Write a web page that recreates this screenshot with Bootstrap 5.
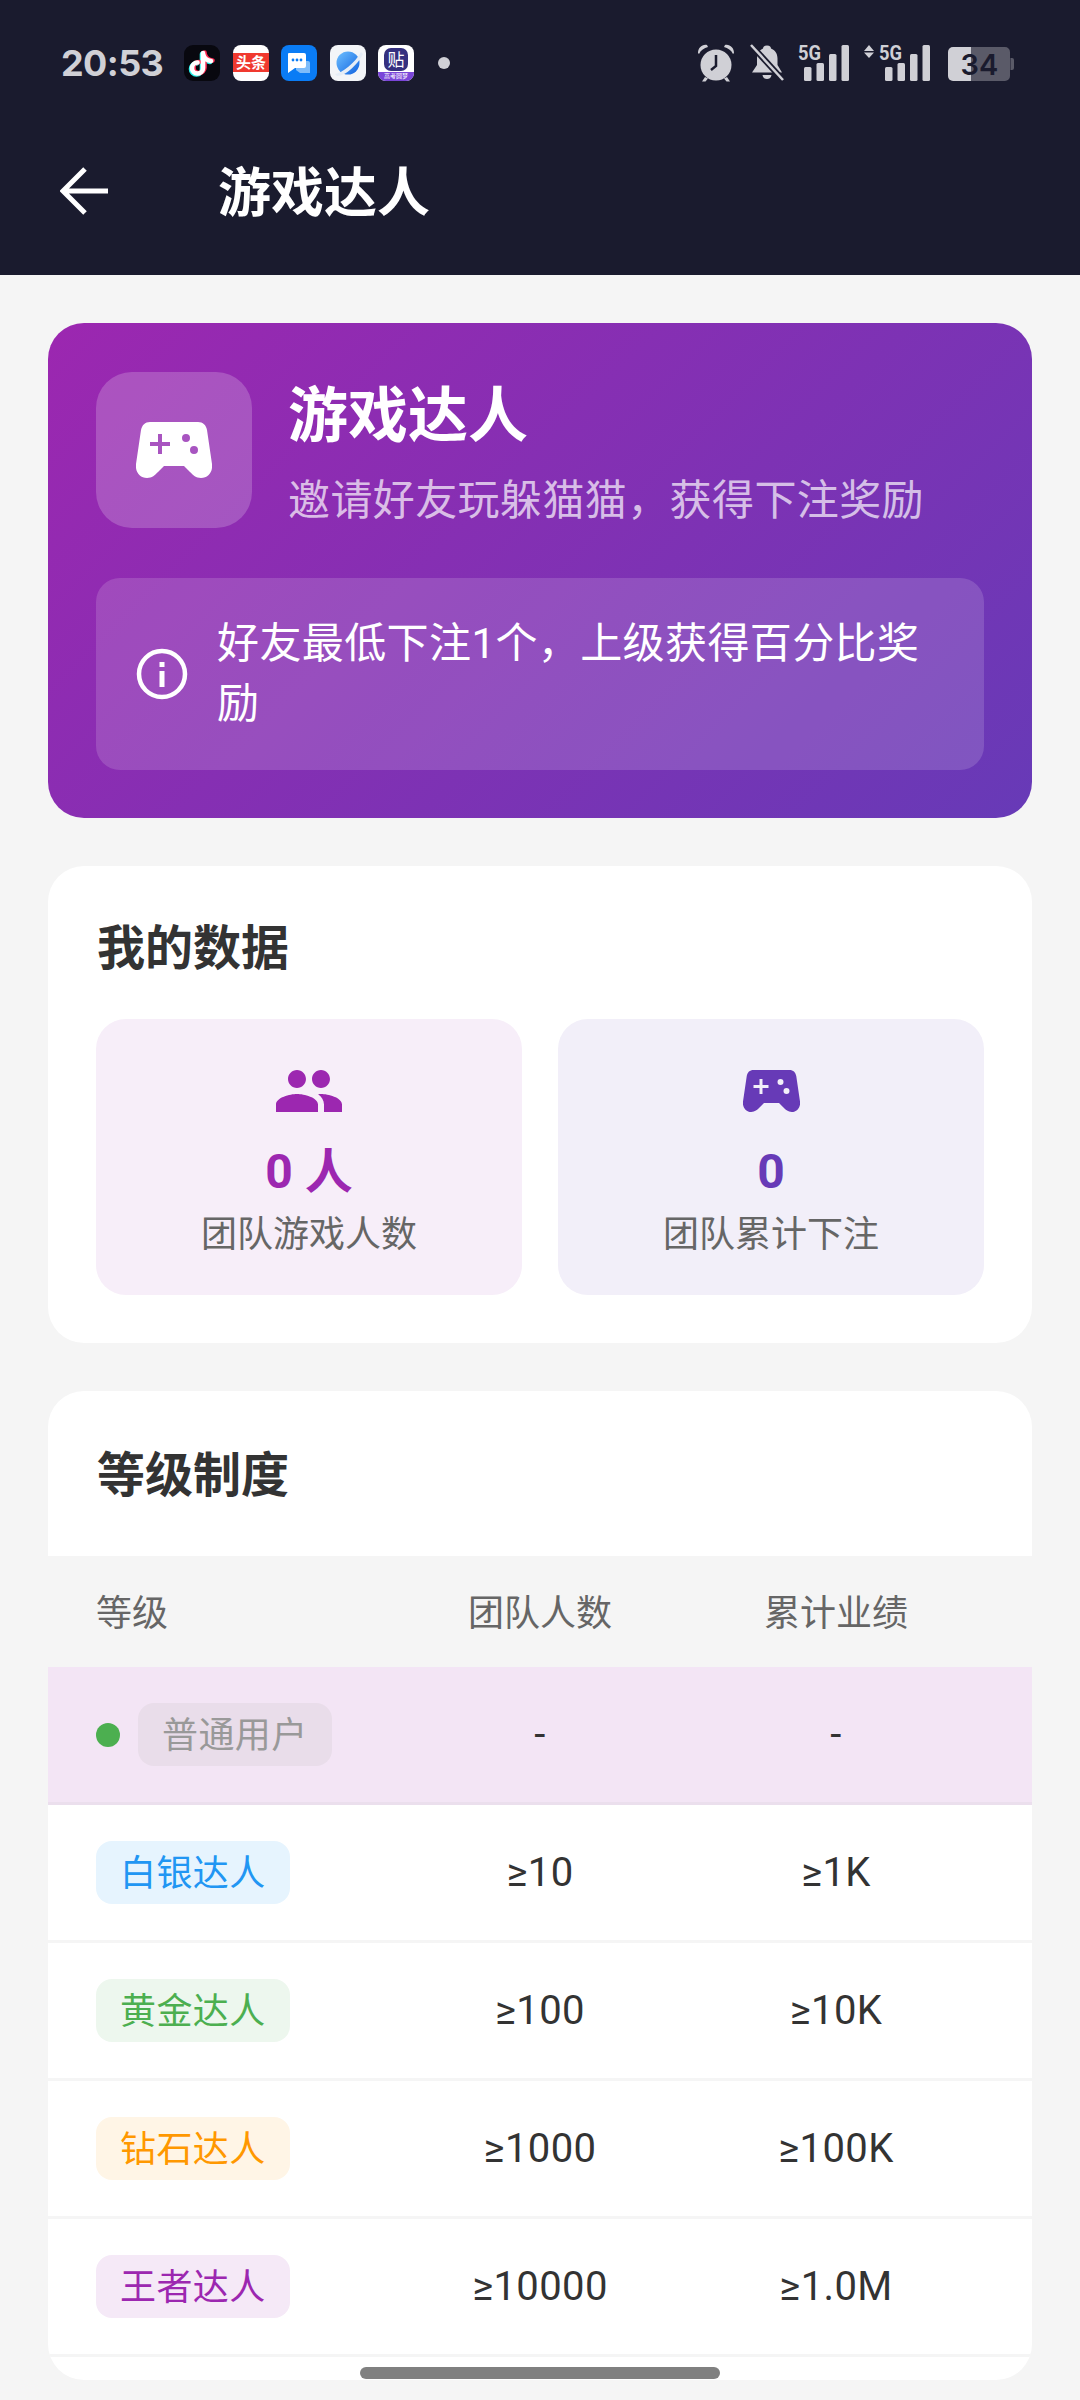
<!DOCTYPE html>
<html lang="zh">
<head>
  <meta charset="utf-8">
  <title>游戏达人</title>
  <link rel="stylesheet" href="https://cdn.jsdelivr.net/npm/bootstrap@5.3.0/dist/css/bootstrap.min.css">
  <style>
    body { width: 1080px; height: 2400px; overflow: hidden; background: #f5f5f5; color: #333; font-family: Roboto, "Noto Sans CJK SC", sans-serif; }
    .app-head { height: 275px; background: #1a1b2e; color: #fff; }
    .status-row { height: 125px; padding: 0 66px 0 61px; color: #d0d0d6; }
    .status-time { width: 98px; margin-right: 25px; font: 700 36px/1 Inter, sans-serif; letter-spacing: -.6px; white-space: nowrap; }
    .app-dot { width: 12px; height: 12px; margin-left: 24px; background: #d0d0d6; border-radius: 50%; }
    .status-apps { gap: 12.5px; }
    .status-icons { gap: 14px; }
    .tool-row { height: 132px; padding-left: 60px; }
    .tool-title { margin: 0 0 0 110px; padding-top: 6px; font-size: 53px; font-weight: 700; line-height: 1; }
    .page-body { padding: 48px 48px 0; }
    .hero-box { height: 495px; padding: 48px; margin-bottom: 48px; color: #fff; background: linear-gradient(135deg, #9c27b0, #673ab7); border-radius: 36px; }
    .hero-top { height: 207px; gap: 36px; }
    .hero-icon { width: 156px; height: 156px; margin-top: 1px; background: rgba(255,255,255,.2); border-radius: 36px; }
    .hero-title { margin: 0 0 10px; padding-top: 2px; font-size: 60px; font-weight: 700; line-height: 88px; }
    .hero-sub { font-size: 42px; line-height: 60px; letter-spacing: .4px; color: rgba(255,255,255,.7); white-space: nowrap; }
    .hero-info { gap: 25px; padding: 36px 36px 36px; height: 192px; background: rgba(255,255,255,.15); border-radius: 24px; font-size: 42px; line-height: 60px; letter-spacing: .4px; }
    .white-box { background: #fff; border: 0; border-radius: 36px; }
    .data-box { height: 477px; padding: 48px; margin-bottom: 48px; }
    .box-title { margin: 0; padding-left: 1px; font-size: 48px; font-weight: 700; line-height: 58px; color: #333; }
    .data-box .box-title { padding-top: 6px; }
    .stat-grid { gap: 36px; margin-top: 41px; }
    .stat-tile { flex: 1 1 0; height: 276px; padding-top: 36px; border-radius: 30px; text-align: center; }
    .stat-tile svg { display: block; margin: 0 auto 12px; }
    .tile-pink { background: #f7eef9; color: #9c27b0; }
    .tile-violet { background: #f2eff9; color: #673ab7; }
    .stat-num { font-size: 48px; font-weight: 700; line-height: 66px; }
    .stat-cap { font-size: 36px; line-height: 60px; color: #666; }
    .level-box { height: 989px; overflow: hidden; }
    .level-head { height: 165px; padding: 49px 48px 0; }
    .level-head .box-title { line-height: 72px; }
    .grid-row { display: flex; align-items: center; padding: 0 48px; font-size: 40px; letter-spacing: .4px; }
    .grid-row > div { flex: 1 1 0; text-align: center; }
    .grid-row > div:first-child { text-align: left; }
    .grid-head { height: 111px; padding-top: 5px; background: #f5f5f5; color: #666; font-size: 36px; letter-spacing: 0; }
    .grid-line { height: 138px; border-bottom: 3px solid #f5f5f5; }
    .grid-on { background: #f3e5f5; border-bottom-color: #ebdfed; }
    .rank-chip { display: inline-block; height: 63px; padding: 0 24px; border-radius: 16px; font-size: 36px; line-height: 67px; letter-spacing: .4px; }
    .chip-plain { background: #e9ddea; color: #999; }
    .chip-silver { background: #e6f4fe; color: #2196f3; }
    .chip-gold { background: #edf7ee; color: #4caf50; }
    .chip-diamond { background: #fff5e6; color: #ff9800; }
    .chip-king { background: #f5e9f7; color: #9c27b0; }
    .on-dot { width: 24px; height: 24px; margin-right: 18px; background: #4caf50; border-radius: 50%; }
    .gesture-pill { left: 360px; bottom: 21px; width: 360px; height: 12px; background: #808080; border-radius: 6px; }
  </style>
</head>
<body class="position-relative">
<svg width="0" height="0" class="position-absolute">
  <symbol id="pad" viewBox="0 0 76 56">
    <path fill="currentColor" fill-rule="evenodd" d="M14 0H62C67 0 70 3 71 8L76 42C77 50 72 56 65 56C60 56 57 53 54 50L48 44H28L22 50C19 53 16 56 11 56C4 56 -1 50 0 42L5 8C6 3 9 0 14 0ZM22 12V20H14V24H22V32H26V24H34V20H26V12ZM50 12A4 4 0 1 0 50 20A4 4 0 1 0 50 12ZM58 24A4 4 0 1 0 58 32A4 4 0 1 0 58 24Z"/>
  </symbol>
</svg>

<header class="app-head d-flex flex-column">
  <div class="status-row d-flex align-items-center">
    <div class="status-time">20:53</div>
    <div class="status-apps d-flex align-items-center">
      <svg width="36" height="36" viewBox="0 0 36 36">
        <rect width="36" height="36" rx="9" fill="#08080f"/>
        <g fill="none" stroke-width="4.6" stroke-linecap="round">
          <path d="M19 8V23A5.5 5.5 0 1 1 13.5 17.500M19 9C20 13 23 15.500 27 16" stroke="#25f4ee" transform="translate(-1 1)"/>
          <path d="M19 8V23A5.5 5.5 0 1 1 13.5 17.500M19 9C20 13 23 15.500 27 16" stroke="#fe2c55" transform="translate(1.500 -.5)"/>
          <path d="M19 8V23A5.5 5.5 0 1 1 13.5 17.500M19 9C20 13 23 15.500 27 16" stroke="#fff"/>
        </g>
      </svg>
      <svg width="36" height="36" viewBox="0 0 36 36">
        <rect width="36" height="36" rx="8" fill="#fff"/>
        <rect y="8" width="36" height="19" fill="#f0392f"/>
        <text x="18" y="23" text-anchor="middle" font-family="'Noto Sans CJK SC', sans-serif" font-size="15" font-weight="700" fill="#fff">头条</text>
      </svg>
      <svg width="36" height="36" viewBox="0 0 36 36">
        <rect width="36" height="36" rx="8" fill="#0a7cf5"/>
        <path d="M15 16H27A2 2 0 0 1 29 18V28H19L15 25Z" fill="#7dbcfa"/>
        <path d="M8 8H23A2 2 0 0 1 25 10V21A2 2 0 0 1 23 23H14L7 28V9A1 1 0 0 1 8 8Z" fill="#fff"/>
        <circle cx="12" cy="15" r="1.400" fill="#0a7cf5"/><circle cx="16" cy="15" r="1.400" fill="#0a7cf5"/><circle cx="20" cy="15" r="1.400" fill="#0a7cf5"/>
      </svg>
      <svg width="36" height="36" viewBox="0 0 36 36">
        <defs><linearGradient id="pl" x1="0" y1="0" x2="1" y2="1"><stop offset="0" stop-color="#6fc0ff"/><stop offset="1" stop-color="#0f62e0"/></linearGradient></defs>
        <rect width="36" height="36" rx="8" fill="#f3f5f8"/>
        <circle cx="18" cy="18" r="11.500" fill="url(#pl)"/>
        <path d="M5 29C12 28 25 18 31 7L33 9C28 19 16 31 7 31Z" fill="#e6edf6"/>
      </svg>
      <svg width="36" height="36" viewBox="0 0 36 36">
        <rect width="36" height="36" rx="8" fill="#fff"/>
        <path d="M0 27H36V28A8 8 0 0 1 28 36H8A8 8 0 0 1 0 28Z" fill="#7a45d8"/>
        <rect x="6" y="3" width="24" height="23" rx="7" fill="#35307f"/>
        <text x="18" y="21" text-anchor="middle" font-family="'Noto Sans CJK SC', sans-serif" font-size="17" fill="#fff">贴</text>
        <text x="18" y="33" text-anchor="middle" font-family="'Noto Sans CJK SC', sans-serif" font-size="6" fill="#fff">高考圆梦</text>
      </svg>
    </div>
    <div class="app-dot"></div>
    <div class="status-icons d-flex align-items-center ms-auto">
      <svg width="39" height="38" viewBox="0 0 39 38" fill="currentColor">
        <circle cx="19" cy="21" r="15.500"/>
        <path d="M1 9C1 4 5 0 10 1L11 3C7 4 4 6 2 10ZM37 9C37 4 33 0 28 1L27 3C31 4 34 6 36 10Z"/>
        <path d="M8 33L5 37.500H8.500L11 34.500ZM30 33L33 37.500H29.500L27 34.500Z"/>
        <path d="M19 11V22L14 26" fill="none" stroke="#1a1b2e" stroke-width="2.500"/>
      </svg>
      <svg width="34" height="38" viewBox="0 0 34 38" fill="currentColor">
        <path d="M17 1.500C20 1.500 21 3 21 4.500C25 6 27.500 9.500 27.500 14.500V21L32 28.500H2L7 21V14.500C7 9.500 9.500 6 13 4.500C13 3 14 1.500 17 1.500Z"/>
        <path d="M12.500 31H21.500C21 34 19 35 17 35C15 35 13 34 12.500 31Z"/>
        <path d="M1 1L33 36" stroke="#1a1b2e" stroke-width="6"/>
        <path d="M1 1L33 36" stroke="currentColor" stroke-width="2.500"/>
      </svg>
      <svg width="52" height="46" viewBox="0 -4 52 46" fill="currentColor">
        <text x="0" y="16" font-family="Roboto, sans-serif" font-size="20" font-weight="700" textLength="23" lengthAdjust="spacingAndGlyphs">5G</text>
        <rect x="6" y="23" width="7.500" height="14" rx="1.500"/>
        <rect x="18.500" y="19" width="7.500" height="18" rx="1.500"/>
        <rect x="31" y="10" width="7.500" height="27" rx="1.500"/>
        <rect x="43.500" y="1" width="7.500" height="36" rx="1.500"/>
      </svg>
      <svg width="67" height="46" viewBox="0 -4 67 46" fill="currentColor">
        <path d="M5 1L10 7H0ZM5 14L10 8.500H0Z"/>
        <text x="15" y="16" font-family="Roboto, sans-serif" font-size="20" font-weight="700" textLength="23" lengthAdjust="spacingAndGlyphs">5G</text>
        <rect x="21" y="23" width="7.500" height="14" rx="1.500"/>
        <rect x="33.500" y="19" width="7.500" height="18" rx="1.500"/>
        <rect x="46" y="10" width="7.500" height="27" rx="1.500"/>
        <rect x="58.500" y="1" width="7.500" height="36" rx="1.500"/>
      </svg>
      <svg width="69" height="38" viewBox="0 0 69 38">
        <path d="M26 3H60A5 5 0 0 1 65 8V32A5 5 0 0 1 60 37H26ZM65.500 14H67A2 2 0 0 1 69 16V24A2 2 0 0 1 67 26H65.500Z" fill="#5a5a68"/>
        <path d="M8 3H26V37H8A5 5 0 0 1 3 32V8A5 5 0 0 1 8 3Z" fill="currentColor"/>
        <text x="34.500" y="31" text-anchor="middle" font-family="Inter, sans-serif" font-size="29" font-weight="600" fill="#1a1b2e">34</text>
      </svg>
    </div>
  </div>
  <div class="tool-row d-flex align-items-center">
    <svg width="48" height="48" viewBox="0 0 48 48"><path d="M48 24H4M25 2L3 24L25 46" fill="none" stroke="#fff" stroke-width="5"/></svg>
    <h1 class="tool-title">游戏达人</h1>
  </div>
</header>

<main class="page-body">
  <section class="hero-box">
    <div class="hero-top d-flex align-items-start">
      <div class="hero-icon d-flex align-items-center justify-content-center flex-shrink-0">
        <svg width="76" height="56"><use href="#pad"/></svg>
      </div>
      <div>
        <h2 class="hero-title">游戏达人</h2>
        <div class="hero-sub">邀请好友玩躲猫猫，获得下注奖励</div>
      </div>
    </div>
    <div class="hero-info d-flex align-items-center">
      <svg class="flex-shrink-0" width="60" height="60" viewBox="0 0 60 60">
        <circle cx="30" cy="30" r="23" fill="none" stroke="#fff" stroke-width="4.500"/>
        <rect x="27.500" y="27" width="5" height="16" fill="#fff"/>
        <rect x="27.500" y="18" width="5" height="5" fill="#fff"/>
      </svg>
      <div>好友最低下注1个，上级获得百分比奖励</div>
    </div>
  </section>

  <section class="card white-box data-box">
    <h3 class="box-title">我的数据</h3>
    <div class="stat-grid d-flex">
      <div class="stat-tile tile-pink">
        <svg width="66" height="72" viewBox="1 3 22 18" preserveAspectRatio="xMidYMid meet"><path fill="currentColor" d="M16 11c1.660 0 2.990-1.340 2.990-3S17.660 5 16 5s-3 1.340-3 3 1.340 3 3 3zm-8 0c1.660 0 2.990-1.340 2.990-3S9.660 5 8 5 5 6.340 5 8s1.340 3 3 3zm0 2c-2.330 0-7 1.170-7 3.500V19h14v-2.500c0-2.330-4.670-3.500-7-3.500zm8 0c-.29 0-.62.02-.97.05 1.160.84 1.970 1.970 1.970 3.450V19h6v-2.500c0-2.330-4.670-3.500-7-3.500z"/></svg>
        <div class="stat-num">0 人</div>
        <div class="stat-cap">团队游戏人数</div>
      </div>
      <div class="stat-tile tile-violet">
        <svg width="57" height="72" viewBox="0 -15 76 86"><use href="#pad" width="76" height="56"/></svg>
        <div class="stat-num">0</div>
        <div class="stat-cap">团队累计下注</div>
      </div>
    </div>
  </section>

  <section class="card white-box level-box">
    <div class="level-head"><h3 class="box-title">等级制度</h3></div>
    <div class="grid-row grid-head"><div>等级</div><div>团队人数</div><div>累计业绩</div></div>
    <div class="grid-row grid-line grid-on">
      <div class="d-flex align-items-center"><span class="on-dot"></span><span class="rank-chip chip-plain">普通用户</span></div>
      <div>-</div><div>-</div>
    </div>
    <div class="grid-row grid-line"><div><span class="rank-chip chip-silver">白银达人</span></div><div>≥10</div><div>≥1K</div></div>
    <div class="grid-row grid-line"><div><span class="rank-chip chip-gold">黄金达人</span></div><div>≥100</div><div>≥10K</div></div>
    <div class="grid-row grid-line"><div><span class="rank-chip chip-diamond">钻石达人</span></div><div>≥1000</div><div>≥100K</div></div>
    <div class="grid-row grid-line"><div><span class="rank-chip chip-king">王者达人</span></div><div>≥10000</div><div>≥1.0M</div></div>
  </section>
</main>
<div class="gesture-pill position-absolute"></div>
<script src="https://cdn.jsdelivr.net/npm/bootstrap@5.3.0/dist/js/bootstrap.bundle.min.js"></script>
</body>
</html>
